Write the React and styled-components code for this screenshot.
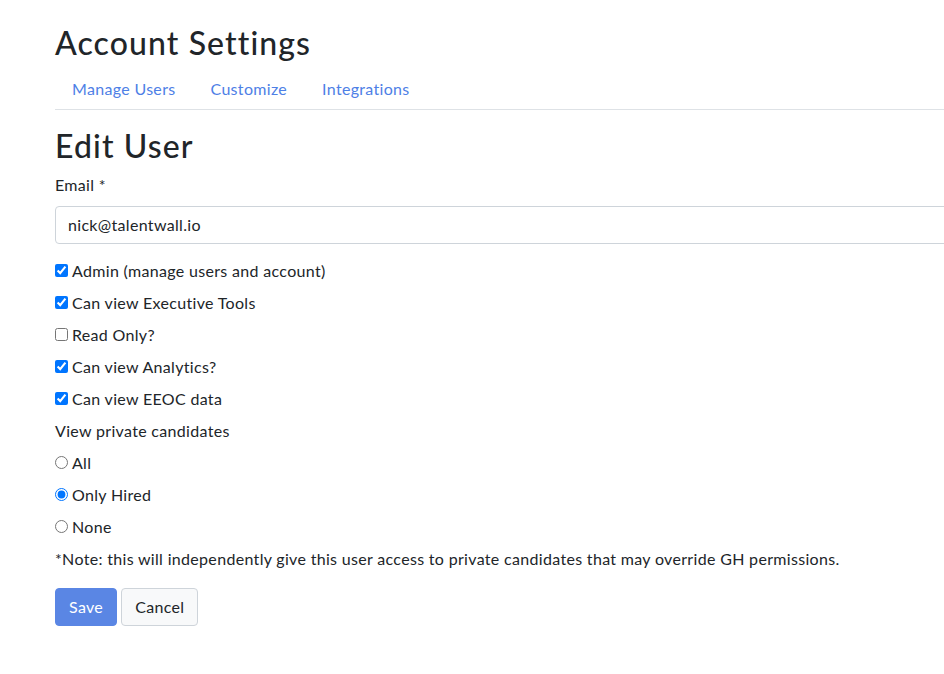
import React from "react";
import styled, { createGlobalStyle } from "styled-components";

const GlobalStyle = createGlobalStyle`
  body {
    margin: 0;
    overflow-x: hidden;
    font-family: Lato, "Open Sans", sans-serif;
    font-size: 16px;
    letter-spacing: 0.32px;
    color: #212529;
    background: #fff;
  }
`;

const Page = styled.div`
  padding: 24px 0 40px 55px;
  width: 1100px;
`;

const Title = styled.h2`
  font-size: 32px;
  font-weight: 500;
  letter-spacing: 1.1px;
  line-height: 1.2;
  margin: 0 0 7px;
`;

const Tabs = styled.nav`
  display: flex;
  border-bottom: 1px solid #dee2e6;
  margin-bottom: 17px;
`;

const Tab = styled.a`
  padding: 8px 18px 8px 17px;
  line-height: 24px;
  color: #4e80e6;
  text-decoration: none;
`;

const Label = styled.div`
  line-height: 24px;
  margin-bottom: ${props => props.gap}px;
`;

const Input = styled.input`
  display: block;
  box-sizing: border-box;
  width: 100%;
  height: 38px;
  padding: 6px 12px;
  border: 1px solid #ced4da;
  border-radius: 4px;
  font: inherit;
  letter-spacing: inherit;
  color: #212529;
  margin-bottom: 15px;
`;

const Option = styled.label`
  display: flex;
  align-items: center;
  line-height: 24px;
  margin-bottom: 8px;
  input {
    margin: 0 4px 0 0;
    width: 13px;
    height: 13px;
  }
`;

const Note = styled.p`
  line-height: 24px;
  margin: 0 0 17px;
`;

const Buttons = styled.div`
  display: flex;
  gap: 4px;
`;

const Button = styled.button`
  height: 38px;
  padding: 0 13px;
  font: inherit;
  letter-spacing: inherit;
  border-radius: 4px;
  border: 1px solid ${props => (props.primary ? "#5a86e4" : "#ced4da")};
  background: ${props => (props.primary ? "#5a86e4" : "#f8f9fa")};
  color: ${props => (props.primary ? "#fff" : "#212529")};
`;

const checks = [
  ["Admin (manage users and account)", true],
  ["Can view Executive Tools", true],
  ["Read Only?", false],
  ["Can view Analytics?", true],
  ["Can view EEOC data", true],
];

const radios = [
  ["All", false],
  ["Only Hired", true],
  ["None", false],
];

export default function App() {
  return (
    <Page>
      <GlobalStyle />
      <Title>Account Settings</Title>
      <Tabs>
        <Tab href="#">Manage Users</Tab>
        <Tab href="#">Customize</Tab>
        <Tab href="#">Integrations</Tab>
      </Tabs>
      <Title>Edit User</Title>
      <Label gap={9}>Email *</Label>
      <Input defaultValue="nick@talentwall.io" />
      {checks.map(([text, on]) => (
        <Option key={text}>
          <input type="checkbox" defaultChecked={on} />
          {text}
        </Option>
      ))}
      <Label gap={8}>View private candidates</Label>
      {radios.map(([text, on]) => (
        <Option key={text}>
          <input type="radio" name="private" defaultChecked={on} />
          {text}
        </Option>
      ))}
      <Note>
        *Note: this will independently give this user access to private candidates that may
        override GH permissions.
      </Note>
      <Buttons>
        <Button primary>Save</Button>
        <Button>Cancel</Button>
      </Buttons>
    </Page>
  );
}
